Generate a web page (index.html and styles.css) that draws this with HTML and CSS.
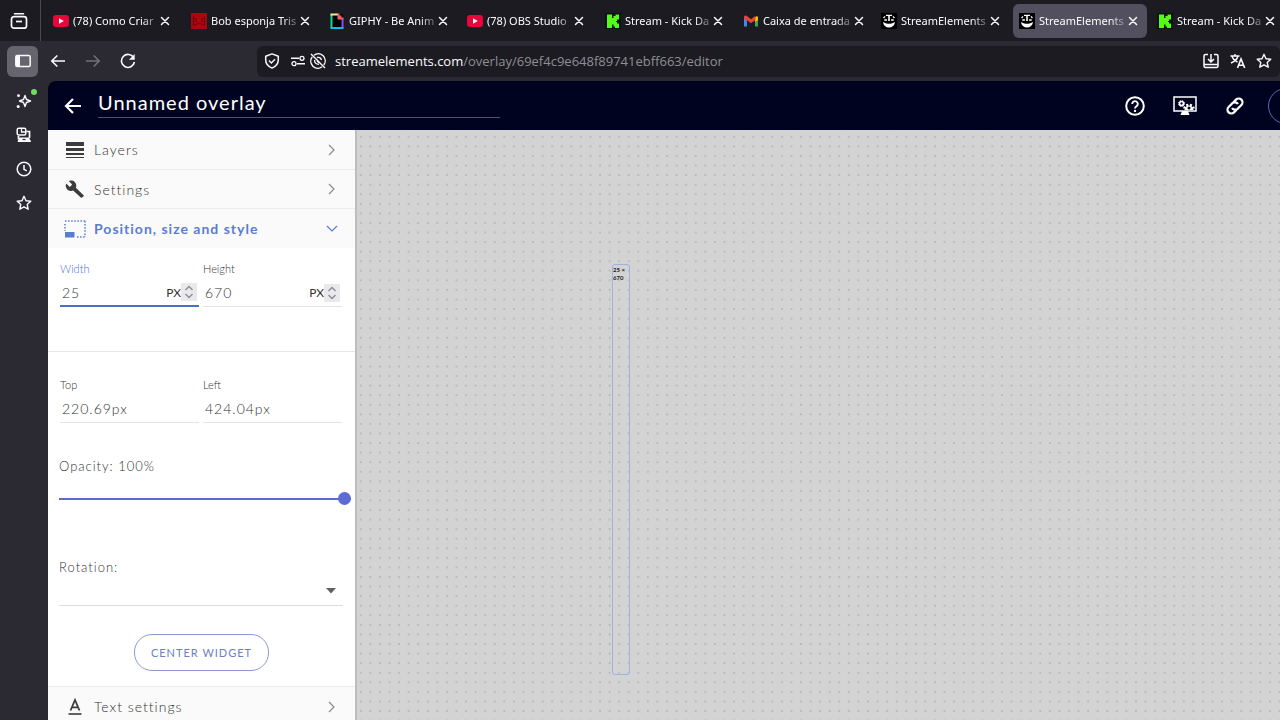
FILE: index.html
```
<!DOCTYPE html>
<html lang="pt-BR">
<head>
    <meta charset="UTF-8">
    <meta name="viewport" content="width=device-width, initial-scale=1.0">
    <title>StreamElements - Unnamed overlay</title>
    <link rel="stylesheet" href="styles.css">
</head>
<body>
    <svg class="defs" width="0" height="0" aria-hidden="true">
        <symbol id="i-close" viewBox="0 0 10 10"><path d="M1.500 1.500l7 7M8.500 1.500l-7 7" fill="none" stroke="currentColor" stroke-width="1.500" stroke-linecap="round"/></symbol>
        <symbol id="i-youtube" viewBox="0 0 16 16"><rect y="2" width="16" height="12" rx="3" fill="#e8063a"/><path d="M6 5.300v5.400L10.800 8z" fill="#fff"/></symbol>
        <symbol id="i-kick" viewBox="0 0 16 16"><rect width="16" height="16" fill="#0a1408"/><path d="M2 1.500h5v3.500h1.500v-2h2v-1.500H14v5h-2v1.500h-1v1h1v1.500h2v4.500h-4v-1.500H8.500v-2H7v3.500H2z" fill="#53fc18"/></symbol>
        <symbol id="i-se" viewBox="0 0 16 16"><rect width="16" height="16" fill="#000"/><path d="M7.200 2.500h1.600V8H7.200zM5 1.800h6v1.300H5zM2 4.500l2.200-1.800v1.500L3 5.500zM14 4.500l-2.200-1.800v1.500L13 5.500zM3.300 6.300h2.600v1.400H3.300zM10.100 6.300h2.600v1.400h-2.600zM2 9c1.500.3 2 1.700 6 1.700S12.500 9.300 14 9c-.5 3.600-2.800 5.500-6 5.500S2.500 12.600 2 9z" fill="#fff"/></symbol>
        <symbol id="i-star" viewBox="0 0 16 16"><path d="M8 1.300l2 4.400 4.800.5-3.600 3.200 1 4.800L8 11.800l-4.200 2.400 1-4.800L1.200 6.200 6 5.700z" fill="none" stroke="currentColor" stroke-width="1.400" stroke-linejoin="round"/></symbol>
        <symbol id="i-chevron" viewBox="0 0 12 12"><path d="M3 1l5 5-5 5" fill="none" stroke="currentColor" stroke-width="1.200"/></symbol>
        <symbol id="i-stepper" viewBox="0 0 16 18"><rect width="16" height="18" fill="#e9e9ed"/><path d="M4.500 7L8 3.500 11.500 7M4.500 11L8 14.500l3.500-3.500" fill="none" stroke="#8b8b90" stroke-width="1.300"/></symbol>
    </svg>

    <div class="tab-bar">
        <button class="recent-btn" aria-label="Firefox View">
            <svg viewBox="0 0 18 18" width="18" height="18"><path d="M4.500 1.800h9" stroke="currentColor" stroke-width="1.500" stroke-linecap="round"/><rect x="1.500" y="4.700" width="15" height="11.500" rx="2.500" fill="none" stroke="currentColor" stroke-width="1.700"/><path d="M6 9.500h6" stroke="currentColor" stroke-width="1.700"/></svg>
        </button>
        <div class="tabs">
            <div class="tab">
                <svg class="favicon"><use href="#i-youtube"/></svg>
                <span class="tab-label">(78) Como Criar</span>
                <button class="tab-close" aria-label="Close tab"><svg><use href="#i-close"/></svg></button>
            </div>
            <div class="tab">
                <svg class="favicon" viewBox="0 0 16 16"><rect width="16" height="16" fill="#b00510"/><path d="M3 5l3 2M13 5l-3 2M4 12c2-2 6-2 8 0M4 8.500h2M10 8.500h2M2.500 3v10M13.500 3v10" fill="none" stroke="#6b040a" stroke-width="1.200"/></svg>
                <span class="tab-label">Bob esponja Tris</span>
                <button class="tab-close" aria-label="Close tab"><svg><use href="#i-close"/></svg></button>
            </div>
            <div class="tab">
                <svg class="favicon" viewBox="0 0 16 16"><rect x="2" y="1" width="12" height="14" fill="#000"/><path d="M2.500 1v14" stroke="#0fd98b" stroke-width="2"/><path d="M13.500 6v9" stroke="#8d4bf0" stroke-width="2"/><path d="M1.500 15h13" stroke="#18b8e8" stroke-width="2"/><path d="M1.500 1.500H9" stroke="#f6ec8b" stroke-width="2"/><path d="M8.500 .500h2v2h2v2h2v2h-6z" fill="#f2616d"/></svg>
                <span class="tab-label">GIPHY - Be Anim</span>
                <button class="tab-close" aria-label="Close tab"><svg><use href="#i-close"/></svg></button>
            </div>
            <div class="tab">
                <svg class="favicon"><use href="#i-youtube"/></svg>
                <span class="tab-label">(78) OBS Studio</span>
                <button class="tab-close" aria-label="Close tab"><svg><use href="#i-close"/></svg></button>
            </div>
            <div class="tab">
                <svg class="favicon"><use href="#i-kick"/></svg>
                <span class="tab-label">Stream - Kick Da</span>
                <button class="tab-close" aria-label="Close tab"><svg><use href="#i-close"/></svg></button>
            </div>
            <div class="tab">
                <svg class="favicon" viewBox="0 0 16 16"><path d="M1 4v9.500h3V6z" fill="#4285f4"/><path d="M15 4v9.500h-3V6z" fill="#34a853"/><path d="M12 4.500L14 3l1 1v3l-3 2z" fill="#fbbc04"/><path d="M1 4c0-1.600 1.600-1.900 2.600-1.200L8 6.200l4.400-3.400V7L8 10.200 4 7.200 1 6z" fill="#ea4335"/></svg>
                <span class="tab-label">Caixa de entrada</span>
                <button class="tab-close" aria-label="Close tab"><svg><use href="#i-close"/></svg></button>
            </div>
            <div class="tab">
                <svg class="favicon"><use href="#i-se"/></svg>
                <span class="tab-label">StreamElements</span>
                <button class="tab-close" aria-label="Close tab"><svg><use href="#i-close"/></svg></button>
            </div>
            <div class="tab active">
                <svg class="favicon"><use href="#i-se"/></svg>
                <span class="tab-label">StreamElements</span>
                <button class="tab-close" aria-label="Close tab"><svg><use href="#i-close"/></svg></button>
            </div>
            <div class="tab">
                <svg class="favicon"><use href="#i-kick"/></svg>
                <span class="tab-label">Stream - Kick Da</span>
                <button class="tab-close" aria-label="Close tab"><svg><use href="#i-close"/></svg></button>
            </div>
        </div>
    </div>

    <div class="toolbar">
        <div class="nav-buttons">
            <button class="nav-btn pressed" aria-label="Sidebar">
                <svg viewBox="0 0 16 16"><rect x=".8" y="2.500" width="14.400" height="11" rx="1.500" fill="none" stroke="currentColor" stroke-width="1.500"/><path d="M1 3h4v10H1z" fill="currentColor"/></svg>
            </button>
            <button class="nav-btn" aria-label="Back">
                <svg viewBox="0 0 16 16"><path d="M15 8H2M7.300 2.500L1.800 8l5.500 5.500" fill="none" stroke="currentColor" stroke-width="1.600"/></svg>
            </button>
            <button class="nav-btn" aria-label="Forward" disabled>
                <svg viewBox="0 0 16 16"><path d="M1 8h13M8.700 2.500L14.200 8l-5.500 5.500" fill="none" stroke="currentColor" stroke-width="1.600"/></svg>
            </button>
            <button class="nav-btn" aria-label="Reload">
                <svg viewBox="0 0 16 16"><path d="M13.600 4.600A6.500 6.500 0 1 0 14.400 9" fill="none" stroke="currentColor" stroke-width="1.600"/><path d="M14.700 1v5.800H9z" fill="currentColor"/></svg>
            </button>
        </div>
        <div class="url-bar">
            <svg class="url-icon" viewBox="0 0 16 16"><path d="M8 .900l6.300 2.300v3.600c0 4-2.500 6.800-6.300 8.300-3.800-1.500-6.300-4.300-6.300-8.300V3.200z" fill="none" stroke="currentColor" stroke-width="1.500" stroke-linejoin="round"/><path d="M5 7.600l2.300 2.300L11 6.200" fill="none" stroke="currentColor" stroke-width="1.400"/></svg>
            <div class="url-perms">
                <svg class="url-icon" viewBox="0 0 16 16"><path d="M1 5.300h8M7 10.700h8" stroke="currentColor" stroke-width="1.400"/><circle cx="12" cy="5.300" r="2" fill="none" stroke="currentColor" stroke-width="1.300"/><circle cx="4" cy="10.700" r="2" fill="none" stroke="currentColor" stroke-width="1.300"/></svg>
                <svg class="url-icon" viewBox="0 0 16 16"><path d="M4 2.200a7 7 0 0 1 9.800 9.800M12 13.800A7 7 0 0 1 2.200 4M1 1l14 14" fill="none" stroke="currentColor" stroke-width="1.400"/><path d="M7 4.500c2-.5 4 .6 4.500 2.500M4.600 7c-.3 2.500 1.400 4.300 4.400 4.300M7 8l2.500 2" fill="none" stroke="currentColor" stroke-width="1.300"/></svg>
            </div>
            <div class="url"><b>streamelements.com</b>/overlay/69ef4c9e648f89741ebff663/editor</div>
            <button class="url-btn" aria-label="Install app">
                <svg viewBox="0 0 16 16"><path d="M5 1.500H2.500a1.500 1.500 0 0 0-1.500 1.500v10a1.500 1.500 0 0 0 1.500 1.500h11A1.500 1.500 0 0 0 15 13V3a1.500 1.500 0 0 0-1.500-1.500H11M1 11.500h14M8 1v7.500M5 6l3 3 3-3" fill="none" stroke="currentColor" stroke-width="1.500"/></svg>
            </button>
            <button class="url-btn" aria-label="Translate">
                <svg viewBox="0 0 16 16"><path d="M.5 3h9M5 1v2M2 3c.8 3 3 5 5.500 6M8 3c-.8 3-3.500 5.500-7 7" fill="none" stroke="currentColor" stroke-width="1.400"/><path d="M7.500 15l3.500-9 3.700 9M8.800 12.200h4.500" fill="none" stroke="currentColor" stroke-width="1.600"/></svg>
            </button>
            <button class="url-btn" aria-label="Bookmark"><svg><use href="#i-star"/></svg></button>
        </div>
    </div>

    <div class="browser-body">
        <nav class="rail">
            <button class="rail-btn" aria-label="AI chatbot">
                <svg viewBox="0 0 16 16"><path d="M9 2.500l1.500 4 4 1.500-4 1.500-1.500 4-1.500-4-4-1.500 4-1.500z" fill="none" stroke="currentColor" stroke-width="1.400" stroke-linejoin="round"/><circle cx="2.500" cy="2.700" r="1.400" fill="currentColor"/><circle cx="2.200" cy="13.500" r="1.500" fill="currentColor"/></svg>
                <span class="dot"></span>
            </button>
            <button class="rail-btn" aria-label="Synced tabs">
                <svg viewBox="0 0 16 16"><path d="M10.500 4.500h3v6.500M2.500 9v3.500M2 13.800h12.500" fill="none" stroke="currentColor" stroke-width="1.700"/><path d="M3.500 10.500h9.500l2 4.500H1.500z" fill="currentColor"/><rect x="1.200" y="1.200" width="8.600" height="6.800" rx="1.500" fill="none" stroke="currentColor" stroke-width="1.500"/><path d="M5.500 1v4h4" fill="none" stroke="currentColor" stroke-width="1.300"/><path d="M6.500 12.500h3" stroke="#2b2a33" stroke-width="1.200"/></svg>
            </button>
            <button class="rail-btn" aria-label="History">
                <svg viewBox="0 0 16 16"><circle cx="8" cy="8" r="6.800" fill="none" stroke="currentColor" stroke-width="1.500"/><path d="M8 4v4.300l2.800 1.500" fill="none" stroke="currentColor" stroke-width="1.500"/></svg>
            </button>
            <button class="rail-btn" aria-label="Bookmarks"><svg><use href="#i-star"/></svg></button>
        </nav>

        <div class="app">
            <header class="app-header">
                <button class="header-btn" aria-label="Back to overlays">
                    <svg viewBox="0 0 20 20"><path d="M18 10H3.500M10 3l-7 7 7 7" fill="none" stroke="currentColor" stroke-width="2.200"/></svg>
                </button>
                <input class="overlay-name" type="text" value="Unnamed overlay" aria-label="Overlay name">
                <div class="header-actions">
                    <button class="header-btn" aria-label="Help">
                        <svg viewBox="0 0 20 20"><circle cx="10" cy="10" r="8.800" fill="none" stroke="currentColor" stroke-width="2"/><path d="M7.200 8a2.800 2.800 0 1 1 4.300 2.300c-1 .7-1.500 1.100-1.500 2.300" fill="none" stroke="currentColor" stroke-width="1.900"/><circle cx="10" cy="14.900" r="1.200" fill="currentColor"/></svg>
                    </button>
                    <button class="header-btn monitor" aria-label="Overlay resolution">
                        <svg viewBox="0 0 24 20"><rect x="1" y="1" width="22" height="14" fill="none" stroke="currentColor" stroke-width="1.500"/><path d="M9 15h6l1.500 4h-9z" fill="currentColor"/><circle cx="8.500" cy="7.500" r="2" fill="none" stroke="currentColor" stroke-width="1.700"/><circle cx="8.500" cy="7.500" r="3" fill="none" stroke="currentColor" stroke-width="1" stroke-dasharray="1.200 1.200"/><path d="M11.500 14a4.500 4.500 0 0 1 9 0z" fill="currentColor"/><path d="M11.200 12.500a5 5 0 0 1 9.600 0" fill="none" stroke="currentColor" stroke-width="2.400" stroke-dasharray="2 1.600"/><circle cx="16" cy="12" r="1.500" fill="#00031f"/></svg>
                    </button>
                    <button class="header-btn" aria-label="Copy overlay URL">
                        <svg viewBox="0 0 20 20"><g transform="rotate(-45 10 10)" fill="none" stroke="currentColor" stroke-width="2.200"><path d="M8.500 13.800H4.800a3.800 3.800 0 0 1 0-7.600h5.700a3.800 3.800 0 0 1 3 4.500"/><path d="M11.500 6.200h3.700a3.800 3.800 0 0 1 0 7.600H9.500a3.800 3.800 0 0 1-3-4.500"/></g></svg>
                    </button>
                    <button class="preview-btn" aria-label="Preview"></button>
                </div>
            </header>

            <div class="workspace">
                <aside class="panel">
                    <button class="section-head">
                        <svg class="section-icon" viewBox="0 0 22 18"><path d="M2 1h18v4H2zM2 7h18v3H2zM2 12h18v2H2zM2 16h18v1H2z" fill="#3c3c3c"/></svg>
                        <span>Layers</span>
                        <svg class="chevron"><use href="#i-chevron"/></svg>
                    </button>
                    <button class="section-head">
                        <svg class="section-icon" viewBox="0 0 22 18"><path d="M19.600 15.300l-7.700-7.500c.8-1.900.4-4.200-1.200-5.700C9.100.5 6.600.2 4.700 1.100l3.500 3.500-2.400 2.400L2.200 3.500c-.9 1.900-.5 4.300 1.100 5.900 1.600 1.500 3.900 1.900 5.800 1.100l7.700 7.100c.3.300.9.300 1.200 0l1.600-1.300c.4-.3.400-.8 0-1z" fill="#3c3c3c"/></svg>
                        <span>Settings</span>
                        <svg class="chevron"><use href="#i-chevron"/></svg>
                    </button>
                    <button class="section-head open">
                        <svg class="section-icon" viewBox="0 0 22 18"><path d="M1 1h20M21 1v16M1 4v7M13 17h8" fill="none" stroke="currentColor" stroke-width="1.500" stroke-dasharray="1.500 1.600"/><path d="M1 12h9.500v5.500H1z" fill="currentColor"/></svg>
                        <span>Position, size and style</span>
                        <svg class="chevron"><use href="#i-chevron"/></svg>
                    </button>

                    <div class="section-body">
                        <div class="field-row">
                            <div class="field focused">
                                <label for="width">Width</label>
                                <div class="field-input">
                                    <input type="number" id="width" value="25">
                                    <span class="unit">PX</span>
                                    <svg class="stepper"><use href="#i-stepper"/></svg>
                                </div>
                            </div>
                            <div class="field">
                                <label for="height">Height</label>
                                <div class="field-input">
                                    <input type="number" id="height" value="670">
                                    <span class="unit">PX</span>
                                    <svg class="stepper"><use href="#i-stepper"/></svg>
                                </div>
                            </div>
                        </div>
                        <hr>
                        <div class="field-row">
                            <div class="field">
                                <label for="top">Top</label>
                                <div class="field-input"><input type="text" id="top" value="220.69px"></div>
                            </div>
                            <div class="field">
                                <label for="left">Left</label>
                                <div class="field-input"><input type="text" id="left" value="424.04px"></div>
                            </div>
                        </div>
                        <div class="control opacity">
                            <label for="opacity">Opacity: 100%</label>
                            <input type="range" id="opacity" min="0" max="100" value="100">
                        </div>
                        <div class="control rotation">
                            <label for="rotation">Rotation:</label>
                            <div class="select-wrap">
                                <select id="rotation"><option></option></select>
                                <svg class="caret" viewBox="0 0 10 6"><path d="M0 0h10L5 5.500z" fill="#616161"/></svg>
                            </div>
                        </div>
                        <button class="center-btn">CENTER WIDGET</button>
                    </div>

                    <button class="section-head last">
                        <svg class="section-icon" viewBox="0 0 22 18"><path d="M6.500 12.500L11 2l4.500 10.500M8 9.300h6" fill="none" stroke="#3c3c3c" stroke-width="1.800"/><path d="M4.500 16h13" stroke="#3c3c3c" stroke-width="1.600"/></svg>
                        <span>Text settings</span>
                        <svg class="chevron"><use href="#i-chevron"/></svg>
                    </button>
                </aside>

                <main class="canvas">
                    <svg class="grid" width="100%" height="100%" aria-hidden="true">
                        <defs>
                            <pattern id="dots" width="10" height="10" patternUnits="userSpaceOnUse" patternTransform="translate(-1 2) scale(.957)">
                                <circle cx="5" cy="5" r="1" fill="#afb2bd"/>
                            </pattern>
                        </defs>
                        <rect width="100%" height="100%" fill="url(#dots)"/>
                    </svg>
                    <div class="widget">25 × 670</div>
                </main>
            </div>
        </div>
    </div>
</body>
</html>
```
FILE: styles.css
```
* {
    box-sizing: border-box;
}

body {
    margin: 0;
    height: 100vh;
    display: flex;
    flex-direction: column;
    overflow: hidden;
    background-color: #2b2a33;
    color: #fbfbfe;
    font-family: "Noto Sans", sans-serif;
    font-size: 11px;
}

button {
    display: flex;
    align-items: center;
    justify-content: center;
    padding: 0;
    border: none;
    background: none;
    color: inherit;
    font: inherit;
    cursor: pointer;
}

button svg {
    width: 16px;
    height: 16px;
}

.defs {
    position: absolute;
}

/* Browser tabs */
.tab-bar {
    display: flex;
    flex: none;
    height: 41px;
    background-color: #1c1b22;
}

.recent-btn {
    flex: none;
    width: 41px;
    padding-right: 2px;
    border-right: 1px solid #4a4952;
}

.recent-btn svg {
    width: 18px;
    height: 18px;
}

.tabs {
    display: flex;
    align-items: center;
    gap: 4px;
    padding-left: 6px;
}

.tab {
    display: flex;
    align-items: center;
    flex: none;
    width: 134px;
    height: 34px;
    padding: 0 7px 0 6px;
    border-radius: 6px;
}

.tab.active {
    background-color: #52505e;
}

.favicon {
    flex: none;
    width: 16px;
    height: 16px;
    margin-right: 4px;
}

.tab-label {
    flex: 1;
    white-space: nowrap;
    mask-image: linear-gradient(to left, rgba(0, 0, 0, 0.3), #000 14px);
}

.tab-close {
    flex: none;
    width: 18px;
    height: 20px;
}

.tab-close svg {
    width: 10px;
    height: 10px;
}

/* Address bar */
.toolbar {
    display: flex;
    align-items: center;
    flex: none;
    height: 40px;
    padding-left: 7px;
}

.nav-buttons {
    display: flex;
    flex: none;
    gap: 4px;
    width: 250px;
}

.nav-btn {
    width: 31px;
    height: 31px;
    border-radius: 6px;
}

.nav-btn.pressed {
    background-color: #66656e;
}

.nav-btn:disabled {
    color: #73727b;
}

.url-bar {
    display: flex;
    align-items: center;
    flex: 1;
    height: 31px;
    padding: 0 8px 0 7px;
    border-radius: 6px;
    background-color: #1c1b22;
}

.url-icon {
    flex: none;
    width: 16px;
    height: 16px;
}

.url-perms {
    display: flex;
    gap: 4px;
    margin: 0 9px 0 10px;
}

.url {
    flex: 1;
    color: #8f8e96;
    font-family: "Open Sans", sans-serif;
    font-size: 13px;
    white-space: nowrap;
}

.url b {
    color: #fbfbfe;
    font-weight: 400;
}

.url-btn {
    width: 27px;
    height: 27px;
}

.url-btn:last-child {
    width: 16px;
    margin-left: 5px;
}

/* Browser sidebar */
.browser-body {
    display: flex;
    flex: 1;
    min-height: 0;
}

.rail {
    display: flex;
    flex-direction: column;
    align-items: center;
    flex: none;
    gap: 4px;
    width: 48px;
    padding-top: 5px;
}

.rail-btn {
    position: relative;
    width: 30px;
    height: 30px;
}

.dot {
    position: absolute;
    top: 3px;
    right: 2px;
    width: 6px;
    height: 6px;
    border-radius: 50%;
    background-color: #6fdc62;
}

/* Overlay editor */
.app {
    display: flex;
    flex-direction: column;
    flex: 1;
    min-width: 0;
    overflow: hidden;
    border-top-left-radius: 8px;
    font-family: Lato, sans-serif;
}

.app-header {
    display: flex;
    align-items: center;
    flex: none;
    height: 49px;
    padding-left: 10px;
    background-color: #00031f;
    color: #fff;
}

.header-btn {
    flex: none;
    width: 30px;
    height: 30px;
}

.header-btn svg {
    width: 20px;
    height: 20px;
}

.header-btn.monitor svg {
    width: 24px;
}

.overlay-name {
    flex: 0 1 402px;
    min-width: 0;
    height: 29px;
    margin-left: 10px;
    margin-bottom: 4px;
    padding: 0 0 2px;
    border: none;
    border-bottom: 1px solid #50526a;
    outline: none;
    background: none;
    color: #fff;
    font-family: inherit;
    font-size: 20px;
    letter-spacing: 1px;
}

.header-actions {
    display: flex;
    align-items: center;
    flex: none;
    gap: 20px;
    margin-left: auto;
    margin-right: -24px;
}

.preview-btn {
    width: 36px;
    height: 36px;
    margin-left: -2px;
    border: 1px solid #5a6cb8;
    border-radius: 50%;
}

.workspace {
    display: flex;
    flex: 1;
    min-height: 0;
}

.panel {
    flex: none;
    width: 307px;
    overflow: hidden;
    background-color: #fff;
    color: #333;
    font-weight: 300;
    letter-spacing: 1px;
}

.section-head {
    width: 100%;
    height: 39px;
    padding: 0 17px 0 16px;
    background-color: #fafafa;
    color: #333;
    font-size: 14px;
    letter-spacing: 1px;
}

.section-head + .section-head {
    border-top: 1px solid #ececec;
}

.section-head span {
    flex: 1;
    text-align: left;
}

.section-head .section-icon {
    width: 22px;
    height: 18px;
    margin-right: 8px;
}

.section-head .chevron {
    width: 12px;
    height: 12px;
    color: #8a8a8a;
}

.section-head.open {
    height: 40px;
    color: #5a7dcf;
    font-weight: 700;
}

.section-head.open .chevron {
    color: #5a7dcf;
    transform: rotate(90deg);
}

.section-head.last {
    height: 40px;
    border-top: 1px solid #ececec;
}

.section-body {
    padding-bottom: 15px;
}

.field-row {
    display: flex;
    gap: 4px;
    padding: 13px 13px 0 12px;
}

.field {
    flex: 1;
    min-width: 0;
}

.field label {
    display: block;
    font-size: 11px;
    line-height: 16px;
    letter-spacing: 0;
}

.field-input {
    display: flex;
    align-items: center;
    height: 30px;
    padding-top: 2px;
    border-bottom: 1px solid #e4e4e4;
}

.field-input input {
    flex: 1;
    min-width: 0;
    padding: 0 2px;
    border: none;
    outline: none;
    background: none;
    color: #333;
    font-family: inherit;
    font-size: 14px;
    font-weight: 300;
    letter-spacing: 1px;
    appearance: textfield;
}

.field-input input::-webkit-inner-spin-button {
    display: none;
}

.field.focused label {
    color: #4a6fd0;
}

.field.focused .field-input {
    border-bottom: 2px solid #4a70c8;
}

.unit {
    font-size: 12px;
    font-weight: 400;
    letter-spacing: 0;
}

.stepper {
    width: 16px;
    height: 18px;
    margin-right: 2px;
}

hr {
    height: 1px;
    margin: 44px 0 12px;
    border: none;
    background-color: #e6e6e6;
}

.control {
    padding: 0 12px 0 11px;
    font-size: 13px;
    line-height: 18px;
}

.control label {
    display: block;
}

.opacity {
    margin-top: 34px;
    padding-right: 4px;
}

.opacity input {
    display: block;
    width: 100%;
    height: 20px;
    margin: 14px 0 0;
    appearance: none;
    background: none;
}

.opacity input::-webkit-slider-runnable-track {
    height: 2px;
    background-color: #5c6cc8;
}

.opacity input::-webkit-slider-thumb {
    width: 13px;
    height: 13px;
    margin-top: -6px;
    appearance: none;
    border-radius: 50%;
    background-color: #5c6bd6;
}

.rotation {
    margin-top: 49px;
}

.select-wrap {
    display: flex;
    align-items: center;
    height: 30px;
    border-bottom: 1px solid #dcdcdc;
}

.select-wrap select {
    flex: 1;
    height: 28px;
    appearance: none;
    border: none;
    background: none;
    font: inherit;
}

.caret {
    width: 10px;
    height: 6px;
    margin-right: 7px;
}

.center-btn {
    height: 37px;
    margin: 28px auto 0;
    padding: 0 16px;
    border: 1px solid #8a98cf;
    border-radius: 18px;
    color: #6c7fc4;
    font-size: 11px;
    font-weight: 400;
    letter-spacing: 1px;
}

.canvas {
    position: relative;
    flex: 1;
    min-width: 0;
    overflow: hidden;
    border-left: 2px solid #bdbdbd;
    background-color: #d3d3d3;
}

.grid {
    display: block;
}

.widget {
    position: absolute;
    top: 134px;
    left: 255px;
    width: 18px;
    height: 411px;
    padding: 1px 0 0;
    border: 1px solid #9db2e2;
    border-radius: 3px;
    color: #1d1d1d;
    font-size: 6px;
    font-weight: 700;
    line-height: 8px;
}
```
